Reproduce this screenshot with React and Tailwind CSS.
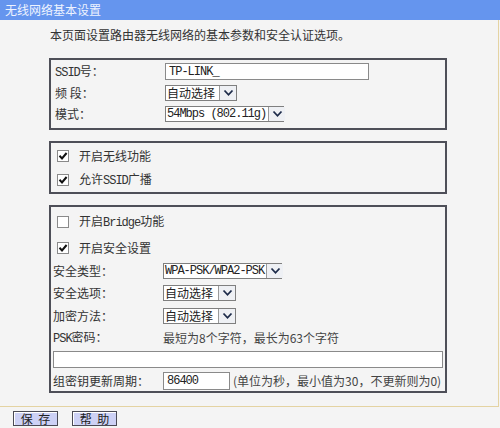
import React from 'react';

const cjk = "font-['Noto_Sans_CJK_SC','Noto_Sans_CJK_JP',sans-serif]";

function Mono({ children }) {
  return (
    <span className="font-['Liberation_Mono',monospace] text-[12px] tracking-[-1px]">{children}</span>
  );
}

function Check({ checked }) {
  return (
    <span className="w-[12px] h-[12px] border border-[#8a8a8a] bg-white flex items-center justify-center shrink-0">
      {checked && (
        <svg width="10" height="10" viewBox="0 0 10 10">
          <path d="M1.5 4.8 L4 7.4 L8.6 2" fill="none" stroke="#111" strokeWidth="2" />
        </svg>
      )}
    </span>
  );
}

function Select({ children, width }) {
  return (
    <div className={`flex h-[16px] border border-[#7f7f7f] bg-white ${width}`}>
      <div className="flex-1 flex items-center pl-[1px] pr-[2px] text-[#222] whitespace-nowrap">{children}</div>
      <div className="w-[17px] shrink-0 border-l border-[#9a9a9a] bg-[#eef0f4] flex items-center justify-center">
        <svg width="11" height="8" viewBox="0 0 11 8">
          <path d="M1.5 1.5 L5.5 5.8 L9.5 1.5" fill="none" stroke="#1d2b4a" strokeWidth="1.8" />
        </svg>
      </div>
    </div>
  );
}

function Row({ label, h, children }) {
  return (
    <div className={`flex items-center ${h}`}>
      <div className="w-[110px] shrink-0">{label}</div>
      {children}
    </div>
  );
}

export default function App() {
  return (
    <div className={`w-[500px] h-[428px] bg-[#f4f4f4] overflow-hidden text-[12px] leading-[14px] text-[#333] ${cjk}`}>
      <div className="h-[20px] bg-[#6595ee] text-[#eef3ff] pl-[5px] flex items-center">无线网络基本设置</div>

      <div className="w-[499px] h-[387px] border-r border-b border-[#e4d3a2] pl-[49px] pt-[8px]">
        <div className="pl-[1px]">本页面设置路由器无线网络的基本参数和安全认证选项。</div>

        <div className="w-[398px] mt-[16px] border-2 border-[#4e4f58] pt-[1px] pb-[3px] pl-[4px]">
          <Row label={<span><Mono>SSID</Mono>号：</span>} h="h-[21px]">
            <div className="w-[204px] h-[17px] border border-[#8a8a8a] bg-white flex items-center pl-[3px] text-[#222]">
              <Mono>TP-LINK_</Mono>
            </div>
          </Row>
          <Row label="频 段：" h="h-[21px]">
            <Select width="w-[72px]">自动选择</Select>
          </Row>
          <Row label="模式：" h="h-[22px]">
            <Select width="w-[119px]"><Mono>54Mbps (802.11g)</Mono></Select>
          </Row>
        </div>

        <div className="w-[398px] mt-[11px] border-2 border-[#4e4f58] pt-[1px] pl-[6px]">
          <div className="flex items-center h-[24px] gap-[10px]">
            <Check checked />
            <span>开启无线功能</span>
          </div>
          <div className="flex items-center h-[24px] gap-[10px]">
            <Check checked />
            <span>允许<Mono>SSID</Mono>广播</span>
          </div>
        </div>

        <div className="w-[398px] mt-[11px] border-2 border-[#4e4f58] pt-[1px] pl-[2px] pr-[2px]">
          <div className="flex items-center h-[28px] gap-[10px] pl-[4px]">
            <Check />
            <span>开启<Mono>Bridge</Mono>功能</span>
          </div>
          <div className="flex items-center h-[24px] gap-[10px] pl-[4px]">
            <Check checked />
            <span>开启安全设置</span>
          </div>
          <Row label="安全类型：" h="h-[22px]">
            <Select width="w-[119px]"><Mono>WPA-PSK/WPA2-PSK</Mono></Select>
          </Row>
          <Row label="安全选项：" h="h-[22px]">
            <Select width="w-[73px]">自动选择</Select>
          </Row>
          <Row label="加密方法：" h="h-[23px]">
            <Select width="w-[73px]">自动选择</Select>
          </Row>
          <Row label={<span><Mono>PSK</Mono>密码：</span>} h="h-[21px]">
            <span className="text-[#444]">最短为8个字符，最长为63个字符</span>
          </Row>
          <div className="h-[22px] flex items-center">
            <div className="w-[390px] h-[17px] border border-[#8a8a8a] bg-white" />
          </div>
          <Row label="组密钥更新周期：" h="h-[21px]">
            <div className="w-[67px] h-[18px] border border-[#8a8a8a] bg-white flex items-center pl-[3px] text-[#222]">
              <Mono>86400</Mono>
            </div>
            <span className="ml-[3px] text-[#444]">(单位为秒，最小值为30，不更新则为0)</span>
          </Row>
        </div>
      </div>

      <div className="flex gap-[14px] pl-[13px] pt-[4px]">
        <button className="w-[45px] h-[15px] border border-[#4a4a55] bg-[#cdd1f5] text-[#222] text-[12px] leading-[13px] whitespace-pre shadow-[inset_1px_1px_0_#ffffff]">保  存</button>
        <button className="w-[45px] h-[15px] border border-[#4a4a55] bg-[#cdd1f5] text-[#222] text-[12px] leading-[13px] whitespace-pre shadow-[inset_1px_1px_0_#ffffff]">帮  助</button>
      </div>
    </div>
  );
}
